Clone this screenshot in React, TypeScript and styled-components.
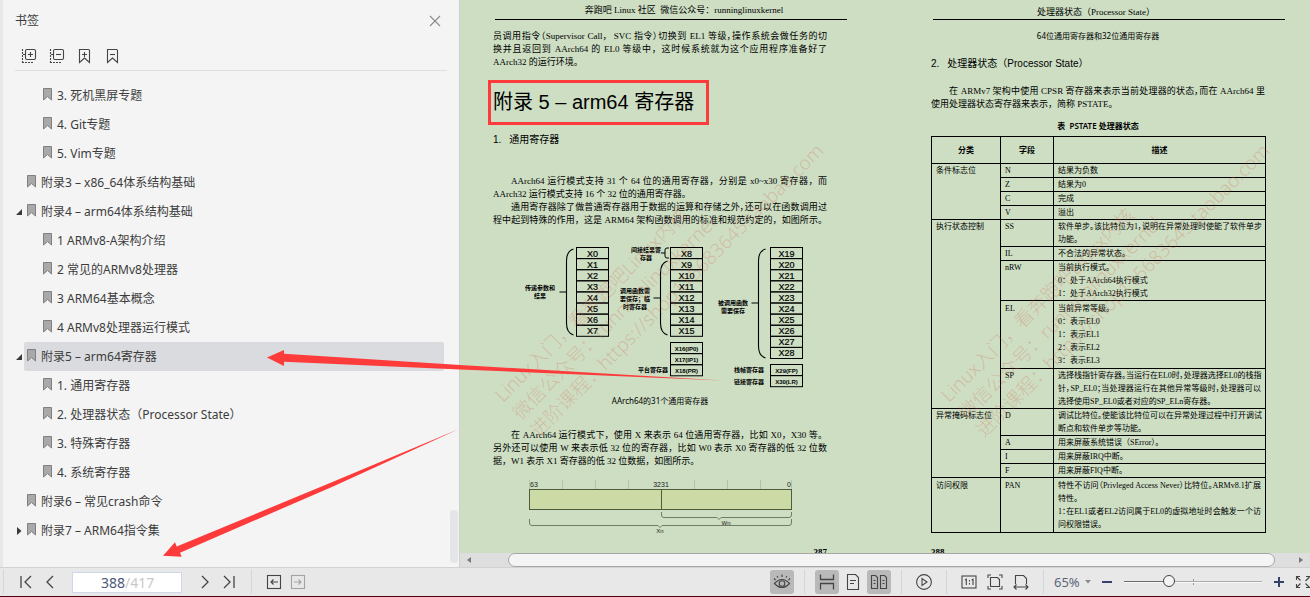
import React from "react";
import styled, { createGlobalStyle, css } from "styled-components";

const sans = `"Noto Sans", "Noto Sans CJK SC", sans-serif`;
const serif = `"Liberation Serif", "Noto Sans CJK SC", serif`;
const arial = `"Liberation Sans", "Noto Sans CJK SC", sans-serif`;
const red = "#fc3b3a";
const paper = "#cddec3";

const GlobalStyle = createGlobalStyle`
  * { box-sizing: border-box; }
  html, body { margin: 0; height: 100%; }
  body { font-family: ${sans}; font-size: 12px; color: #3c3c3c; background: #e8e8e8; }
  button, input, select { font: inherit; color: inherit; margin: 0; padding: 0; border: 0; background: none; }
  h1, h2, p, ul, figure { margin: 0; padding: 0; }
  svg { display: block; }
`;

const Shell = styled.div`
  position: relative;
  display: flex;
  flex-direction: column;
  height: 100vh;
  overflow: hidden;
`;

const Workspace = styled.div`
  display: flex;
  flex: 1;
  min-height: 0;
`;

/* ---------- bookmarks panel ---------- */

const Panel = styled.aside`
  display: flex;
  flex-direction: column;
  flex: 0 0 460px;
  border-left: 3px solid #e8e8e8;
  border-right: 1px solid #cfcfd2;
  background: #f4f4f4;
`;

const PanelHead = styled.header`
  display: flex;
  align-items: center;
  justify-content: space-between;
  height: 42px;
  padding: 0 12px;
`;

const PanelTitle = styled.h2`
  font-size: 12px;
  font-weight: 400;
  line-height: 16px;
`;

const PanelTools = styled.div`
  display: flex;
  gap: 4px;
  height: 29px;
  margin: 0 12px;
  padding: 2px;
  border-bottom: 1px solid #dedede;
`;

const IconButton = styled.button<{ $on?: boolean; $w?: number }>`
  display: flex;
  flex: none;
  align-items: center;
  justify-content: center;
  width: ${(p) => p.$w ?? 24}px;
  height: 24px;
  border-radius: 3px;
  background: ${(p) => (p.$on ? "#b9b9b9" : "transparent")};
`;

const TreeArea = styled.div`
  position: relative;
  flex: 1;
  min-height: 0;
  padding: 10px 15px 0 12px;
`;

const Tree = styled.ul`
  list-style: none;
`;

const TreeRow = styled.li<{ $level: number }>`
  display: flex;
  align-items: center;
  height: 29px;
  padding-left: ${(p) => (p.$level === 2 ? 16 : 0)}px;
`;

const Caret = styled.span`
  flex: 0 0 9px;
`;

const TreeItem = styled.button<{ $selected?: boolean }>`
  display: flex;
  flex: 1;
  align-items: center;
  gap: 5px;
  height: 29px;
  padding: 0 0 2px 3px;
  border-radius: 2px;
  background: ${(p) => (p.$selected ? "#dadbdf" : "transparent")};
  white-space: nowrap;
  text-align: left;
`;

const TreeScroll = styled.div`
  position: absolute;
  right: 1px;
  bottom: 4px;
  width: 8px;
  height: 53px;
  border-radius: 4px;
  background: #e3e5e7;
`;

/* ---------- document viewer ---------- */

const Viewer = styled.main`
  display: flex;
  flex: 1;
  flex-direction: column;
  min-width: 0;
  background: ${paper};
`;

const Spread = styled.div`
  display: flex;
  flex: 1;
  min-height: 0;
  overflow: hidden;
`;

const Page = styled.article<{ $inset: number }>`
  position: relative;
  flex: 1 0 400px;
  padding-left: ${(p) => p.$inset}px;
  color: #000;
  font-family: ${serif};
  font-size: 9px;
`;

const Column = styled.div`
  display: flex;
  flex-direction: column;
  width: 334px;
`;

const Running = styled.header<{ $wide?: boolean }>`
  width: 352px;
  height: 20px;
  margin-left: 2px;
  padding: ${(p) => (p.$wide ? "0 0 0 26px" : "0 26px 0 0")};
  border-bottom: 1px solid #000;
  line-height: ${(p) => (p.$wide ? 20 : 24)}px;
  text-align: center;
  white-space: nowrap;
`;

const Para = styled.p<{ $top: number }>`
  margin-top: ${(p) => p.$top}px;
`;

const Line = styled.span<{ $fill?: boolean; $indent?: boolean; $tight?: boolean }>`
  display: block;
  line-height: 13px;
  padding-left: ${(p) => (p.$indent ? 18 : 0)}px;
  white-space: nowrap;
  font-feature-settings: ${(p) => (p.$tight ? `"palt"` : "normal")};
  ${(p) =>
    p.$fill &&
    css`
      text-align: justify;
      text-align-last: justify;
    `}
`;

const Boxed = styled.h1`
  align-self: flex-start;
  width: 221px;
  margin: 11px 0 0 -5px;
  padding-left: 2px;
  border: 3px solid ${red};
  font-family: ${arial};
  font-size: 20px;
  font-weight: 400;
  line-height: 39px;
  white-space: nowrap;
`;

const Section = styled.h2<{ $top: number }>`
  display: flex;
  gap: 8px;
  margin-top: ${(p) => p.$top}px;
  font-family: ${arial};
  font-size: 10px;
  font-weight: 400;
  line-height: 14px;
`;

const Caption = styled.p<{ $top: number; $bold?: boolean }>`
  margin-top: ${(p) => p.$top}px;
  font-family: ${sans};
  font-size: 8px;
  font-weight: ${(p) => (p.$bold ? 600 : 400)};
  line-height: 12px;
  text-align: center;
`;

const Figure = styled.figure<{ $top: number }>`
  margin-top: ${(p) => p.$top}px;
`;

const PageNumber = styled.p<{ $top: number; $right?: boolean }>`
  margin-top: ${(p) => p.$top}px;
  font-weight: 700;
  line-height: 12px;
  text-align: ${(p) => (p.$right ? "right" : "left")};
`;

const Watermark = styled.svg`
  position: absolute;
  top: 130px;
  left: 0;
  overflow: visible;
  pointer-events: none;
`;

const StateTable = styled.table`
  width: 335px;
  margin-top: 4px;
  border-collapse: collapse;
  table-layout: fixed;
  font-size: 8px;
  line-height: 13px;
  th,
  td {
    border: 1px solid #000;
    padding: 0 4px;
    text-align: left;
    vertical-align: top;
    font-weight: 400;
  }
  thead th {
    height: 27px;
    vertical-align: middle;
    text-align: center;
    font-weight: 600;
  }
`;

const BodyRow = styled.tr<{ $roomy?: boolean }>`
  td {
    padding-top: ${(p) => (p.$roomy ? 1 : 0)}px;
    padding-bottom: ${(p) => (p.$roomy ? 1 : 0)}px;
  }
`;

const HScroll = styled.div`
  display: flex;
  align-items: center;
  height: 14px;
  background: #dedede;
`;

const HArrow = styled.span<{ $end?: boolean }>`
  display: flex;
  flex: 0 0 ${(p) => (p.$end ? 35 : 48)}px;
  justify-content: ${(p) => (p.$end ? "flex-end" : "flex-start")};
  padding: 0 6px;
`;

const HThumb = styled.div`
  flex: 1;
  height: 14px;
  border: 1px solid #a6a6a6;
  border-radius: 7px;
  background: #f4f4f4;
`;

/* ---------- status bar ---------- */

const StatusBar = styled.footer`
  display: flex;
  flex: none;
  align-items: center;
  justify-content: space-between;
  height: 30px;
  border-top: 1px solid #d2d2d4;
  border-bottom: 1px solid #4c0210;
  background: #e8e8e8;
`;

const Group = styled.div`
  display: flex;
  align-items: center;
`;

const Divider = styled.span<{ $edge?: boolean }>`
  width: 1px;
  height: 24px;
  margin: 0 10px 0 ${(p) => (p.$edge ? 3 : 10)}px;
  background: #d6d6d8;
`;

const PageBox = styled.label`
  display: flex;
  align-items: center;
  width: 110px;
  height: 21px;
  margin: 0 11px 0 10px;
  border: 1px solid #cfd8ea;
  background: #fff;
  font-size: 14px;
  line-height: 19px;
  color: #c9c9c9;
`;

const PageInput = styled.input`
  width: 52px;
  color: #4a5876;
  text-align: right;
  outline: 0;
`;

const Tight = styled(Group)`
  gap: 2px;
`;

const ZoomPick = styled.label`
  display: flex;
  align-items: center;
  gap: 2px;
  width: 41px;
  color: #5d6478;
`;

const ZoomSelect = styled.select`
  width: 29px;
  appearance: none;
  font-size: 13px;
  line-height: 18px;
  outline: 0;
`;

const Slider = styled.div`
  position: relative;
  width: 138px;
  height: 24px;
  margin: 0 5px;
`;

const SliderTick = styled.span`
  position: absolute;
  left: 50%;
  top: 9px;
  width: 1px;
  height: 6px;
  background: #9a9a9a;
`;

const Range = styled.input`
  position: relative;
  display: block;
  width: 100%;
  height: 24px;
  appearance: none;
  &::-webkit-slider-runnable-track {
    height: 2px;
    background: linear-gradient(90deg, #6b6b6b 32%, #a9a9a9 32%);
    border-bottom: 1px solid #f8f8f8;
  }
  &::-webkit-slider-thumb {
    appearance: none;
    width: 12px;
    height: 12px;
    margin-top: -6px;
    border: 1px solid #444;
    border-radius: 50%;
    background: #f4f4f4;
  }
`;

const Markup = styled.svg`
  position: absolute;
  left: 0;
  top: 0;
  pointer-events: none;
`;

/* ---------- icons ---------- */

const Ico = ({ children, w = 16, h = 16, c = "#454545" }: { children: React.ReactNode; w?: number; h?: number; c?: string }) => (
  <svg width={w} height={h} viewBox={`0 0 ${w} ${h}`} fill="none" stroke={c} strokeWidth="1.1" aria-hidden="true">
    {children}
  </svg>
);

const BoxDots = ({ plus }: { plus?: boolean }) => (
  <Ico>
    <rect x="4.5" y="1.5" width="10" height="10" rx="1.5" />
    <path d={plus ? "M7 6.5h5M9.5 4v5" : "M7 6.5h5"} />
    <path d="M1.5 1v14M1 14.5h11" strokeDasharray="2 1" />
    <path d="M2 6.5h2" />
  </Ico>
);

const Ribbon = ({ plus }: { plus?: boolean }) => (
  <Ico>
    <path d="M2.5 1.500h9a1 1 0 0 1 1 1v12l-5-4.500-5 4.500z" />
    <path d={plus ? "M5 6.500h5M7.500 4v5" : "M5 6.500h5"} />
  </Ico>
);

const BookmarkGlyph = () => (
  <svg width="9" height="13" viewBox="0 0 9 13" aria-hidden="true">
    <path d="M.5 .5h8v11.500l-4-3.500-4 3.500z" fill="#a9a9a9" stroke="#808080" />
  </svg>
);

const Chevron = ({ d }: { d: string }) => (
  <Ico>
    <path d={d} strokeWidth="1.3" />
  </Ico>
);

/* ---------- bookmarks data ---------- */

type Node = { level: 1 | 2; text: string; caret?: "open" | "closed"; selected?: boolean };

const nodes: Node[] = [
  { level: 2, text: "3. 死机黑屏专题" },
  { level: 2, text: "4. Git专题" },
  { level: 2, text: "5. Vim专题" },
  { level: 1, text: "附录3 – x86_64体系结构基础" },
  { level: 1, text: "附录4 – arm64体系结构基础", caret: "open" },
  { level: 2, text: "1 ARMv8-A架构介绍" },
  { level: 2, text: "2 常见的ARMv8处理器" },
  { level: 2, text: "3 ARM64基本概念" },
  { level: 2, text: "4 ARMv8处理器运行模式" },
  { level: 1, text: "附录5 – arm64寄存器", caret: "open", selected: true },
  { level: 2, text: "1. 通用寄存器" },
  { level: 2, text: "2. 处理器状态（Processor State）" },
  { level: 2, text: "3. 特殊寄存器" },
  { level: 2, text: "4. 系统寄存器" },
  { level: 1, text: "附录6 – 常见crash命令" },
  { level: 1, text: "附录7 – ARM64指令集", caret: "closed" },
];

/* ---------- PSTATE table data; a trailing "~" marks a line set to full measure ---------- */

type Field = { name: string; lines: string[]; roomy?: boolean };
const groups: { title: string; fields: Field[] }[] = [
  {
    title: "条件标志位",
    fields: [
      { name: "N", lines: ["结果为负数"] },
      { name: "Z", lines: ["结果为0"] },
      { name: "C", lines: ["完成"] },
      { name: "V", lines: ["溢出"] },
    ],
  },
  {
    title: "执行状态控制",
    fields: [
      { name: "SS", lines: ["软件单步。该比特位为1，说明在异常处理时使能了软件单步~", "功能。"] },
      { name: "IL", lines: ["不合法的异常状态。"] },
      { name: "nRW", lines: ["当前执行模式。", "0：处于AArch64执行模式", "1：处于AArch32执行模式"] },
      { name: "EL", lines: ["当前异常等级。", "0：表示EL0", "1：表示EL1", "2：表示EL2", "3：表示EL3"], roomy: true },
      {
        name: "SP",
        lines: [
          "选择栈指针寄存器。当运行在EL0时，处理器选择EL0的栈指~",
          "针，SP_EL0；当处理器运行在其他异常等级时，处理器可以~",
          "选择使用SP_EL0或者对应的SP_ELn寄存器。",
        ],
      },
    ],
  },
  {
    title: "异常掩码标志位",
    fields: [
      { name: "D", lines: ["调试比特位。使能该比特位可以在异常处理过程中打开调试~", "断点和软件单步等功能。"] },
      { name: "A", lines: ["用来屏蔽系统错误（SError）。"] },
      { name: "I", lines: ["用来屏蔽IRQ中断。"] },
      { name: "F", lines: ["用来屏蔽FIQ中断。"] },
    ],
  },
  {
    title: "访问权限",
    fields: [
      {
        name: "PAN",
        lines: [
          "特性不访问（Privleged Access Never）比特位。ARMv8.1扩展~",
          "特性。",
          "1：在EL1或者EL2访问属于EL0的虚拟地址时会触发一个访~",
          "问权限错误。",
        ],
        roomy: true,
      },
    ],
  },
];

/* ---------- drawings ---------- */

const Stack = ({ x, y, names, small }: { x: number; y: number; names: string[]; small?: boolean }) => (
  <g>
    {names.map((n, i) => (
      <g key={n}>
        <rect x={x} y={y + i * 11.1} width="32" height="11.1" fill="none" stroke="#000" />
        <text x={x + 16} y={y + i * 11.1 + (small ? 8 : 9)} textAnchor="middle" fontSize={small ? 6 : 9} fontWeight={small ? 700 : 400} stroke={small ? "none" : "#000"} strokeWidth=".2">
          {n}
        </text>
      </g>
    ))}
  </g>
);

const Brace = ({ x, top, bottom, mid }: { x: number; top: number; bottom: number; mid: number }) => (
  <path
    d={`M${x + 7} ${top}q-7 2-7 12V${bottom - 12}q0 10 7 12M${x} ${mid}h-7`}
    fill="none"
    stroke="#000"
    strokeWidth="1.1"
  />
);

const Label = ({ x, y, lines }: { x: number; y: number; lines: string[] }) => (
  <>
    {lines.map((l, i) => (
      <text key={l} x={x} y={y + i * 8} textAnchor="middle" fontSize="6" fontWeight="700">
        {l}
      </text>
    ))}
  </>
);

const range = (a: number, b: number) => Array.from({ length: b - a + 1 }, (_, i) => `X${a + i}`);

/* Origin of this drawing is the text column's left edge. */
const RegisterMap = () => (
  <svg width="334" height="152" viewBox="0 0 334 152" fontFamily={arial} role="img" aria-label="AArch64 registers">
    <Stack x={83.5} y={7.5} names={range(0, 7)} />
    <Stack x={177.5} y={7.5} names={range(8, 15)} />
    <Stack x={177.5} y={102.5} names={["X16(IP0)", "X17(IP1)", "X18(PR)"]} small />
    <Stack x={277.5} y={7.5} names={range(19, 28)} />
    <Stack x={277.5} y={124.5} names={["X29(FP)", "X30(LR)"]} small />
    <Brace x={73.5} top={9} bottom={95} mid={52} />
    <Brace x={167.5} top={21} bottom={95} mid={58} />
    <Brace x={265.5} top={9} bottom={118} mid={63} />
    <path d="M176 8h-2q-2 0-2 2v6q0 2 2 2h2M172 13h-4" fill="none" stroke="#000" />
    <Label x={47} y={50} lines={["传递参数和", "结果"]} />
    <Label x={153} y={12} lines={["间接结果寄", "存器"]} />
    <Label x={142} y={53} lines={["调用函数需", "要保存；临", "时寄存器"]} />
    <Label x={240} y={65} lines={["被调用函数", "需要保存"]} />
    <Label x={160} y={132} lines={["平台寄存器"]} />
    <Label x={256} y={132} lines={["栈帧寄存器"]} />
    <Label x={256} y={144} lines={["链接寄存器"]} />
  </svg>
);

const BitField = () => (
  <svg width="334" height="60" viewBox="0 0 334 60" fontFamily={arial} fontSize="7" fill="#222" role="img" aria-label="Xn and Wn bits">
    <path d="M36.5 5v9M69.5 5v9M102.5 5v9M135.5 5v9M201.5 5v9M234.5 5v9M267.5 5v9M298.5 5v9" stroke="#b3c3a8" />
    <rect x="36.5" y="14.5" width="262" height="20" fill="#ccdaa5" stroke="#4f5b3c" />
    <path d="M168.5 14v21" stroke="#4f5b3c" />
    <path d="M168.5 37v3q0 2.500 2.500 2.500h53l2 2 2-2h68q2.500 0 2.500-2.500v-3M36.500 44v4q0 2.500 2.500 2.500h126l2 2 2-2h127q2.500 0 2.500-2.500v-4" fill="none" stroke="#6e7d66" />
    <text x="37" y="12">63</text>
    <text x="168" y="12" textAnchor="middle">3231</text>
    <text x="298" y="12" textAnchor="end">0</text>
    <text x="233" y="50" textAnchor="middle" fontSize="6">Wn</text>
    <text x="167" y="58" textAnchor="middle" fontSize="6">Xn</text>
  </svg>
);

const Mark = ({ x }: { x: number }) => (
  <Watermark width="10" height="10" fontFamily={sans} fontSize="19" fill="#d8543c" fillOpacity=".26" fontWeight="300">
    <g transform={`translate(${x} 273) rotate(-45)`}>
      <text x="0" y="0">Linux入门，看奔跑吧Linux内核</text>
      <text x="0" y="25">微信公众号：runninglinuxkernel</text>
      <text x="0" y="50">进阶课程：https://shop115683645.taobao.com</text>
    </g>
  </Watermark>
);

export default function App() {
  return (
    <Shell>
      <GlobalStyle />
      <Workspace>
        <Panel>
          <PanelHead>
            <PanelTitle>书签</PanelTitle>
            <IconButton aria-label="关闭">
              <Ico c="#8a8a8a">
                <path d="M3 3l10 10M13 3L3 13" />
              </Ico>
            </IconButton>
          </PanelHead>
          <PanelTools>
            <IconButton aria-label="展开全部"><BoxDots plus /></IconButton>
            <IconButton aria-label="收起全部"><BoxDots /></IconButton>
            <IconButton aria-label="添加书签"><Ribbon plus /></IconButton>
            <IconButton aria-label="删除书签"><Ribbon /></IconButton>
          </PanelTools>
          <TreeArea>
            <Tree>
              {nodes.map((n) => (
                <TreeRow key={n.text} $level={n.level}>
                  <Caret>
                    {n.caret && (
                      <svg width="8" height="8" viewBox="0 0 8 8" fill="#3a3a3a" aria-hidden="true">
                        <path d={n.caret === "open" ? "M7 1v6H1z" : "M2 0l4.500 4L2 8z"} />
                      </svg>
                    )}
                  </Caret>
                  <TreeItem $selected={n.selected}>
                    <BookmarkGlyph />
                    {n.text}
                  </TreeItem>
                </TreeRow>
              ))}
            </Tree>
            <TreeScroll />
          </TreeArea>
        </Panel>

        <Viewer>
          <Spread>
            <Page $inset={33}>
              <Mark x={43} />
              <Column>
                <Running $wide>奔跑吧 Linux 社区&nbsp; 微信公众号：runninglinuxkernel</Running>
                <Para $top={10}>
                  <Line $fill $tight>员调用指令（Supervisor Call，&nbsp; SVC 指令）切换到 EL1 等级，操作系统会做任务的切</Line>
                  <Line $fill>换并且返回到 AArch64 的 EL0 等级中，这时候系统就为这个应用程序准备好了</Line>
                  <Line>AArch32 的运行环境。</Line>
                </Para>
                <Boxed>附录 5 – arm64 寄存器</Boxed>
                <Section $top={8}><span>1.</span><span>通用寄存器</span></Section>
                <Para $top={28}>
                  <Line $fill $indent>AArch64 运行模式支持 31 个 64 位的通用寄存器，分别是 x0~x30 寄存器，而</Line>
                  <Line>AArch32 运行模式支持 16 个 32 位的通用寄存器。</Line>
                  <Line $fill $indent $tight>通用寄存器除了做普通寄存器用于数据的运算和存储之外，还可以在函数调用过</Line>
                  <Line $fill>程中起到特殊的作用，这是 ARM64 架构函数调用的标准和规范约定的，如图所示。</Line>
                </Para>
                <Figure $top={13}><RegisterMap /></Figure>
                <Caption $top={3}>AArch64的31个通用寄存器</Caption>
                <Para $top={22}>
                  <Line $fill $indent>在 AArch64 运行模式下，使用 X 来表示 64 位通用寄存器，比如 X0，X30 等。</Line>
                  <Line $fill>另外还可以使用 W 来表示低 32 位的寄存器，比如 W0 表示 X0 寄存器的低 32 位数</Line>
                  <Line>据，W1 表示 X1 寄存器的低 32 位数据，如图所示。</Line>
                </Para>
                <Figure $top={7}><BitField /></Figure>
                <PageNumber $top={11} $right>387</PageNumber>
              </Column>
            </Page>

            <Page $inset={46}>
              <Mark x={64} />
              <Column>
                <Running>处理器状态（Processor State）</Running>
                <Caption $top={10}>64位通用寄存器和32位通用寄存器</Caption>
                <Section $top={15}><span>2.</span><span>处理器状态（Processor State）</span></Section>
                <Para $top={14}>
                  <Line $fill $indent $tight>在 ARMv7 架构中使用 CPSR 寄存器来表示当前处理器的状态，而在 AArch64 里</Line>
                  <Line>使用处理器状态寄存器来表示，简称 PSTATE。</Line>
                </Para>
                <Caption $top={9} $bold>表&nbsp; PSTATE 处理器状态</Caption>
                <StateTable>
                  <colgroup>
                    <col width="69" />
                    <col width="53" />
                    <col />
                  </colgroup>
                  <thead>
                    <tr><th>分类</th><th>字段</th><th>描述</th></tr>
                  </thead>
                  <tbody>
                    {groups.map((g) =>
                      g.fields.map((f, i) => (
                        <BodyRow key={g.title + f.name} $roomy={f.roomy}>
                          {i === 0 && <td rowSpan={g.fields.length}>{g.title}</td>}
                          <td>{f.name}</td>
                          <td>
                            {f.lines.map((l) => (
                              <Line key={l} $fill={l.endsWith("~")} $tight={l.endsWith("~")}>{l.replace("~", "")}</Line>
                            ))}
                          </td>
                        </BodyRow>
                      ))
                    )}
                  </tbody>
                </StateTable>
                <PageNumber $top={13}>388</PageNumber>
              </Column>
            </Page>
          </Spread>
          <HScroll>
            <HArrow>
              <svg width="6" height="8" viewBox="0 0 6 8" aria-hidden="true"><path d="M5 1v6L1 4z" fill="#777" /></svg>
            </HArrow>
            <HThumb />
            <HArrow $end>
              <svg width="6" height="8" viewBox="0 0 6 8" aria-hidden="true"><path d="M1 1v6l4-3z" fill="#777" /></svg>
            </HArrow>
          </HScroll>
        </Viewer>
      </Workspace>

      <StatusBar>
        <Group>
          <Divider $edge />
          <IconButton aria-label="第一页"><Chevron d="M3 2v12M13 2L7 8l6 6" /></IconButton>
          <IconButton aria-label="上一页"><Chevron d="M11 2L5 8l6 6" /></IconButton>
          <PageBox>
            <PageInput aria-label="页码" defaultValue="388" />
            /417
          </PageBox>
          <IconButton aria-label="下一页"><Chevron d="M5 2l6 6-6 6" /></IconButton>
          <IconButton aria-label="最后一页"><Chevron d="M3 2l6 6-6 6M13 2v12" /></IconButton>
          <Divider />
          <IconButton aria-label="后退">
            <Ico><rect x="1.5" y="1.5" width="13" height="13" /><path d="M12 8H5M7.500 5.500L5 8l2.500 2.500" /></Ico>
          </IconButton>
          <IconButton aria-label="前进">
            <Ico c="#a3a3a3"><rect x="1.5" y="1.5" width="13" height="13" /><path d="M4 8h7M8.500 5.500L11 8l-2.500 2.500" /></Ico>
          </IconButton>
        </Group>

        <Group>
          <IconButton aria-label="护眼模式" $on>
            <Ico w={18}>
              <path d="M1.500 9.500Q9 1.500 16.500 9.500Q9 17.500 1.500 9.500z" />
              <circle cx="9" cy="9.500" r="2.800" />
              <path d="M9 3V.5M5 3.500L4 2M13 3.500L14 2M2.500 6L1 4.500M15.500 6L17 4.500" />
            </Ico>
          </IconButton>
          <Divider />
          <Tight>
            <IconButton aria-label="连续" $on>
              <Ico><path d="M1.500 .5v5h13v-5M1.500 15.500v-6h13v6" strokeWidth="1.3" /></Ico>
            </IconButton>
            <IconButton aria-label="单页">
              <Ico><path d="M2.500 .5h8l3 3v12h-11zM5 6.500h6M5 9.500h4" /></Ico>
            </IconButton>
            <IconButton aria-label="双页" $on>
              <Ico w={18}><path d="M1.500 1.500h4l2 2v11h-6zM10.500 1.500h4l2 2v11h-6zM3.500 6.500h2M3.500 9.500h2M12.500 6.500h2M12.500 9.500h2" /></Ico>
            </IconButton>
          </Tight>
          <Divider />
          <IconButton aria-label="播放">
            <Ico><circle cx="8" cy="8" r="7.4" /><path d="M6 4.500v7L11 8z" /></Ico>
          </IconButton>
          <Divider />
          <Tight>
            <IconButton aria-label="实际大小">
              <Ico><rect x="1" y="2" width="14" height="12" /><path d="M4 6l1.300-.8V11M10.700 6l1.300-.8V11M8.500 6v1.500M8.500 9v1.500" /></Ico>
            </IconButton>
            <IconButton aria-label="适合页面">
              <Ico><path d="M3.500 3.500h7l2 2v7h-9zM1 4V1h3M12 1h3v3M15 12v3h-3M4 15H1v-3" /></Ico>
            </IconButton>
            <IconButton aria-label="适合宽度">
              <Ico><path d="M2.500 10V1.500h8l3 3V10M1 13h14M3.500 10.500L1 13l2.500 2.500M12.500 10.500L15 13l-2.500 2.500" /></Ico>
            </IconButton>
          </Tight>
          <Divider />
          <ZoomPick>
            <ZoomSelect aria-label="缩放"><option>65%</option></ZoomSelect>
            <svg width="6" height="4" viewBox="0 0 6 4" aria-hidden="true"><path d="M0 0h6L3 3.500z" fill="#8a8a8a" /></svg>
          </ZoomPick>
          <IconButton aria-label="缩小"><Ico c="#35436a"><path d="M3 8h10" strokeWidth="2" /></Ico></IconButton>
          <Slider>
            <SliderTick />
            <Range type="range" aria-label="缩放比例" min="0" max="100" defaultValue="31" />
          </Slider>
          <IconButton aria-label="放大"><Ico c="#35436a"><path d="M3 8h10M8 3v10" strokeWidth="2" /></Ico></IconButton>
          <IconButton aria-label="全屏" $w={19}>
            <Ico w={19}>
              <path d="M5.500 6V2.500H9M5.500 2.500l4 4M19 2.500h-4M18.500 3l-4 4M5.500 10v3.500H9M5.500 13.500l4-4M14.500 9.500l4 4M15 13.500h4" />
            </Ico>
          </IconButton>
        </Group>
      </StatusBar>

      <Markup width="760" height="580" viewBox="0 0 760 580" fill={red} aria-hidden="true">
        <path d="M267 357.500L284 350v3.800L460 365l262 15.600-262-11.100L284 361.700V366z" />
        <path d="M163 555.700L175 542.300l1.700 4.200L330 483l129-54-126 57.500L180 552.700l1.700 4z" />
      </Markup>
    </Shell>
  );
}
